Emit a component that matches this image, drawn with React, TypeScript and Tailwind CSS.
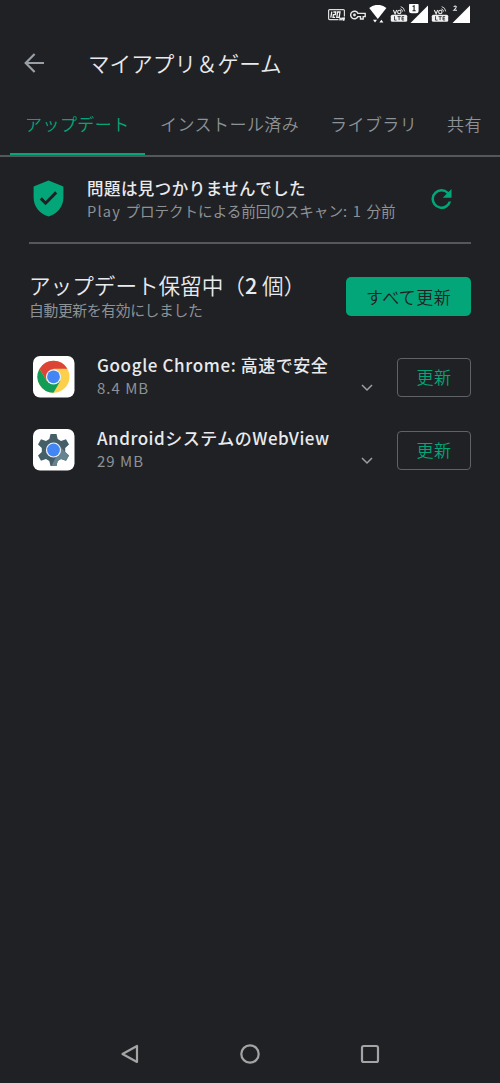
import React from 'react';

function VolteIcon() {
  return (
    <svg width="18" height="18" viewBox="0 0 18 18" fill="none">
      <path d="M3.3 5l1.800 3.800 1.600-3.800" stroke="#e8e8e8" strokeWidth="1.1" />
      <circle cx="9.300" cy="7" r="1.700" stroke="#e8e8e8" strokeWidth="1.1" />
      <path d="M10.300 3.800q2 .6 2.300 2.800M10.700 1.600q3.600.9 4 4.800" stroke="#d8d8d8" strokeWidth="1" />
      <rect x="0.800" y="9.700" width="16.400" height="7" rx="1.500" fill="#f1f1f1" />
      <path d="M4.500 11.200v3.900h2M7.500 11.600h3.200M9.100 11.600v3.500M14.100 11.600H12v3.400h2.100M12 13.300h1.900" stroke="#33343a" strokeWidth="0.9" />
    </svg>
  );
}

function StatusBar() {
  return (
    <div className="flex h-[30px] shrink-0 items-start pl-[328px] pt-[5px]">
      <svg className="mt-[4px] shrink-0" width="17" height="12" viewBox="0 0 17 12" fill="none">
        <path d="M10.5 10.6H1.6a1 1 0 0 1-1-1V1.6a1 1 0 0 1 1-1h13.8a1 1 0 0 1 1 1v6" stroke="#ddd" strokeWidth="1.200" />
        <path d="M3.8 2.600L2.800 8.600M5.400 3h2.300l-.4 2.600H5.400L5 8.300h2.200M9.600 3h2.400l-.8 5.300H8.800zM12 8.500v3M12 10h2M14 8.500v3M15 8.500l.8 2.600.8-2.600" stroke="#f2f2f2" strokeWidth="1.300" />
      </svg>
      <svg className="ml-[5px] mt-[5px] shrink-0" width="16" height="10" viewBox="0 0 16 10" fill="none">
        <path d="M7.9 3.400A3.800 3.800 0 1 0 7.900 6.600H10.500V9H13.200V6.600H15.200V3.400Z" stroke="#e8e8e8" strokeWidth="1.400" />
        <circle cx="4.500" cy="5" r="1.400" fill="#e8e8e8" />
      </svg>
      <svg className="ml-[3px] shrink-0" width="18" height="19" viewBox="0 0 18 19">
        <path d="M0.200 3Q8.800-3.400 17.400 3L8.800 14z" fill="#fff" />
        <path d="M4 14.800h4l-2 2.700zM10.400 17.600l2-2.900 2 2.900z" fill="#fff" />
      </svg>
      <span className="ml-[3px] shrink-0"><VolteIcon /></span>
      <svg className="-mt-px ml-[1px] shrink-0" width="21" height="20" viewBox="0 0 21 20">
        <path d="M1.500 19L19 1.500V19z" fill="#fff" />
        <rect x="-1" y="-2" width="11.500" height="12.500" rx="3" fill="#202124" />
        <rect x="0" y="-1" width="9.600" height="10.300" rx="2.500" fill="#fff" />
        <path d="M3.600 2.600l1.500-.8v5M3.500 6.800h3.200" stroke="#222" strokeWidth="1.100" fill="none" />
      </svg>
      <span className="ml-[1px] shrink-0"><VolteIcon /></span>
      <svg className="-mt-px ml-[2px] shrink-0" width="21" height="20" viewBox="0 0 21 20">
        <path d="M1.500 19L19 1.500V19z" fill="#fff" />
        <path d="M2.700 2.700q1.800-1.400 2.600 0 .2 1.200-2.500 3.600h3.200" stroke="#eee" strokeWidth="1.100" fill="none" />
      </svg>
    </div>
  );
}

function Header() {
  return (
    <header className="flex h-[66px] shrink-0 items-center pl-[24px]">
      <svg width="20" height="20" viewBox="0 0 20 20" fill="none" stroke="#9aa0a6" strokeWidth="2.200">
        <path d="M20 10H2M10.600 1L1.700 10l8.900 9" />
      </svg>
      <h1 className="ml-[44px] whitespace-nowrap text-[21.600px] font-[350] leading-[32px] text-[#e8eaed]">マイアプリ＆ゲーム</h1>
    </header>
  );
}

function Tabs() {
  return (
    <nav className="flex h-[61px] shrink-0 items-stretch overflow-hidden whitespace-nowrap border-b-2 border-[#55585b] pl-[10px] text-[17px] font-[350] leading-[24px] tracking-[0.450px] text-[#8d9297]">
      <div className="flex w-[135px] flex-col justify-between">
        <span className="pl-[15px] pt-[16px] text-[#03a678]">アップデート</span>
        <span className="h-[2px] bg-[#03a678]" />
      </div>
      <span className="w-[170px] pl-[15px] pt-[16px]">インストール済み</span>
      <span className="w-[117px] pl-[15px] pt-[16px]">ライブラリ</span>
      <span className="pl-[15px] pt-[16px]">共有</span>
    </nav>
  );
}

function ProtectStatus() {
  return (
    <section className="mx-[29px] flex h-[87px] shrink-0 border-b-2 border-[#55575a]">
      <svg className="ml-[4px] mt-[23px] shrink-0" width="31" height="37" viewBox="0 0 31 37">
        <path d="M15.500.5L30.400 6.600V17.500C30.400 26.500 24.300 34 15.500 36.400 6.700 34 .6 26.500.6 17.500V6.600z" fill="#03a678" />
        <path d="M7.800 18.400l4.800 4.800L23.200 12.400" fill="none" stroke="#202124" strokeWidth="3" />
      </svg>
      <div className="ml-[23px] w-[344px] whitespace-nowrap pt-[19px]">
        <div className="text-[16.500px] font-medium leading-[24px] tracking-[0.450px] text-[#e8eaed]">問題は見つかりませんでした</div>
        <div className="text-[14.600px] leading-[22px] tracking-[-0.070px] text-[#8d9297]">
          <span className="tracking-[1.200px]">Play </span>プロテクトによる前回のスキャン<span className="tracking-[1.200px]">: 1 </span>分前
        </div>
      </div>
      <svg className="mt-[32px] shrink-0" width="21" height="20" viewBox="4 4 16 16">
        <path fill="#03a678" d="M17.650 6.350A7.960 7.960 0 0 0 12 4a8 8 0 1 0 7.730 10h-2.080A6 6 0 1 1 12 6c1.660 0 3.140.69 4.220 1.780L13 11h7V4z" />
      </svg>
    </section>
  );
}

function PendingHeader() {
  return (
    <section className="flex h-[100px] shrink-0 items-start pl-[29px]">
      <div className="w-[317px] whitespace-nowrap pt-[25px]">
        <h2 className="text-[21.600px] font-[350] leading-[32px] text-[#e8eaed]">アップデート保留中（<span className="font-medium">2</span> 個）</h2>
        <p className="mt-[-2px] text-[14.800px] leading-[22px] tracking-[-0.350px] text-[#8d9297]">自動更新を有効にしました</p>
      </div>
      <button className="mt-[33px] flex h-[39px] w-[125px] items-center justify-center rounded-[5px] bg-[#03a678] text-[17px] font-[350] tracking-[0.400px] text-[#202124]">すべて更新</button>
    </section>
  );
}

function ChromeIcon() {
  return (
    <svg className="shrink-0" width="42" height="42" viewBox="0 0 42 42">
      <rect width="41.500" height="41.500" rx="7" fill="#fff" />
      <circle cx="20.500" cy="20.800" r="16" fill="#fdd04c" />
      <path d="M20.500 20.800L13.600 24.800 6.600 12.800A16 16 0 0 0 20.500 36.800L27.400 24.800z" fill="#109d58" />
      <path d="M6.600 12.800A16 16 0 0 1 34.400 12.800H20.500L13.600 24.800z" fill="#db4437" />
      <circle cx="20.500" cy="20.800" r="7.600" fill="#eef1f3" />
      <circle cx="20.500" cy="20.800" r="6.400" fill="#4285f4" />
    </svg>
  );
}

function WebViewIcon() {
  return (
    <svg className="shrink-0" width="42" height="42" viewBox="0 0 42 42">
      <rect width="41.500" height="41.500" rx="7" fill="#fff" />
      <g transform="translate(-.5 0)">
        <path d="M18 5h6l1.200 5 3.300 1.900 5-1.600 3 5.200-3.800 3.600v3.800l3.800 3.600-3 5.200-5-1.600-3.300 1.900L24 37h-6l-1.200-5-3.300-1.900-5 1.600-3-5.200 3.800-3.600v-3.800L5.500 15.500l3-5.200 5 1.600 3.300-1.900z" fill="#455f68" />
        <path d="M27 17l5.700 5.900 3.800 3.600-3 5.200-5-1.600-3.300 1.900L24 37h-5l4-8z" fill="#668390" />
        <circle cx="21" cy="21" r="7.600" fill="#eef1f3" />
        <circle cx="21" cy="21" r="6.400" fill="#4285f4" />
      </g>
    </svg>
  );
}

type AppRowProps = { icon: React.ReactNode; name: React.ReactNode; size: string };

function AppRow({ icon, name, size }: AppRowProps) {
  return (
    <li className="flex h-[73px] items-start pl-[33px] pt-[12px]">
      {icon}
      <div className="ml-[22px] w-[264px] shrink-0 whitespace-nowrap">
        <div className="-mt-[3px] text-[17px] font-medium leading-[24px] tracking-[0.500px] text-[#e8eaed]">{name}</div>
        <div className="text-[15px] leading-[21px] tracking-[1px] text-[#8d9297]">{size}</div>
      </div>
      <svg className="mt-[28px] shrink-0" width="12" height="8" viewBox="0 0 12 8" fill="none" stroke="#9aa0a6" strokeWidth="1.500">
        <path d="M1 1l5 5 5-5" />
      </svg>
      <button className="ml-[24px] mt-[1.500px] flex h-[39px] w-[74px] shrink-0 items-center justify-center rounded-[4px] border border-[#5f6368] text-[17px] font-[350] tracking-[0.400px] text-[#03a678]">更新</button>
    </li>
  );
}

function NavBar() {
  return (
    <footer className="mt-auto flex h-[58px] shrink-0 items-center justify-between pl-[120px] pr-[120px]">
      <svg width="20" height="20" viewBox="0 0 20 20" fill="none" stroke="#a4a4a4" strokeWidth="2.200" strokeLinejoin="round">
        <path d="M17 2v16L2.500 10z" />
      </svg>
      <svg width="20" height="20" viewBox="0 0 20 20" fill="none" stroke="#a4a4a4" strokeWidth="2.200">
        <circle cx="10" cy="10" r="8.700" />
      </svg>
      <svg width="20" height="20" viewBox="0 0 20 20" fill="none" stroke="#a4a4a4" strokeWidth="2.200">
        <rect x="2" y="2" width="16" height="16" rx="1.800" />
      </svg>
    </footer>
  );
}

export default function App() {
  return (
    <main className="flex h-[1083px] w-[500px] flex-col overflow-hidden bg-[#202124] font-['Noto_Sans_CJK_JP',sans-serif]">
      <StatusBar />
      <Header />
      <Tabs />
      <ProtectStatus />
      <PendingHeader />
      <ul>
        <AppRow icon={<ChromeIcon />} name={<><span className="tracking-[0.620px]">Google Chrome: </span>高速で安全</>} size="8.4 MB" />
        <AppRow icon={<WebViewIcon />} name="AndroidシステムのWebView" size="29 MB" />
      </ul>
      <NavBar />
    </main>
  );
}
